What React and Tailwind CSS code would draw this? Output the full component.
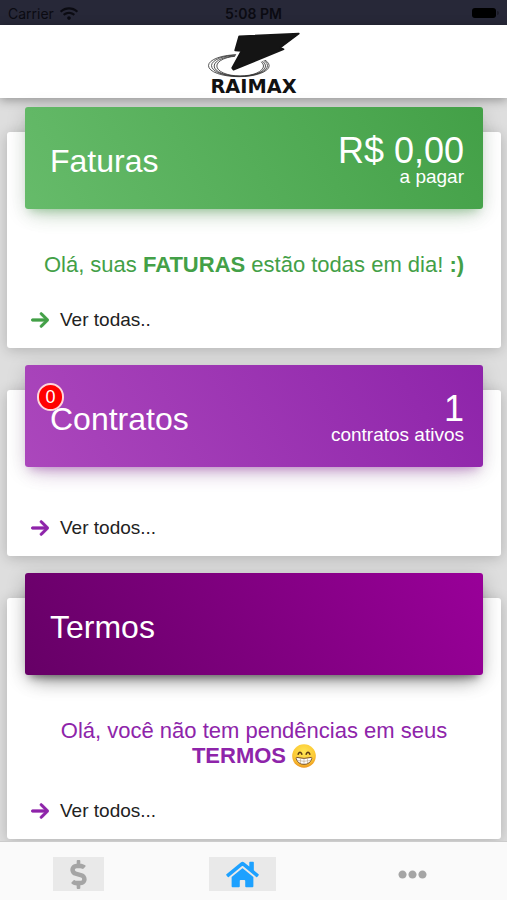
import React from "react";
import { FaDollarSign, FaEllipsisH, FaHome, FaWifi } from "react-icons/fa";
import { FaArrowRight } from "react-icons/fa6";

const CARD_STYLES = {
  green: {
    header:
      "bg-linear-[60deg,#66bb6a,#43a047] shadow-[0_12px_20px_-10px_rgba(76,175,80,0.3),0_4px_20px_0_rgba(0,0,0,0.15),0_7px_8px_-5px_rgba(76,175,80,0.3)]",
    text: "text-[#43a047]",
  },
  purple: {
    header:
      "bg-linear-[60deg,#ab47bc,#8e24aa] shadow-[0_12px_20px_-10px_rgba(156,39,176,0.3),0_4px_20px_0_rgba(0,0,0,0.15),0_7px_8px_-5px_rgba(156,39,176,0.3)]",
    text: "text-[#8e24aa]",
  },
  dark: {
    header:
      "bg-linear-[60deg,#660066,#990099] shadow-[0_12px_20px_-10px_rgba(0,0,0,0.4),0_4px_20px_0_rgba(0,0,0,0.2),0_7px_8px_-5px_rgba(0,0,0,0.4)]",
    text: "text-[#8e24aa]",
  },
};

const BOLT = "M207 31 L386 23 L330 65 L340 70 L190 131 L186 126 L214 75 L195 73 Z";

const Logo = () => (
  <svg viewBox="30 3 440 213" className="w-[147px] h-[71px]" role="img" aria-label="Raimax">
    <g fill="none" stroke="#333" strokeWidth="2.5">
      <ellipse cx="206" cy="119" rx="91" ry="33" />
      <ellipse cx="208" cy="119" rx="84" ry="32" />
      <ellipse cx="209" cy="120" rx="77" ry="31" />
      <ellipse cx="210" cy="120" rx="70" ry="30" />
    </g>
    {/* white halo that opens the rings around the bolt */}
    <path d={BOLT} fill="#fff" stroke="#fff" strokeWidth="18" strokeLinejoin="round" />
    <path d={BOLT} fill="#141414" stroke="#141414" strokeWidth="5" strokeLinejoin="round" />
    <text
      x="250"
      y="201"
      textAnchor="middle"
      className="font-['DejaVu_Sans',sans-serif] text-[58px] font-bold"
      fill="#111"
    >
      RAIMAX
    </text>
  </svg>
);

const GrinEmoji = () => (
  <svg viewBox="0 0 24 24" className="inline-block w-6 h-6 align-[-5px]" role="img" aria-label="sorriso">
    <defs>
      <radialGradient id="face" cx="0.5" cy="0.35" r="0.65">
        <stop offset="0" stopColor="#ffe755" />
        <stop offset="0.7" stopColor="#fcc934" />
        <stop offset="1" stopColor="#eb9420" />
      </radialGradient>
    </defs>
    <circle cx="12" cy="12" r="11.8" fill="url(#face)" />
    <g fill="none" stroke="#5b3a12" strokeWidth="1.6" strokeLinecap="round">
      <path d="M6.2 10.2 Q8 6.4 9.8 10.2" />
      <path d="M14.2 10.2 Q16 6.4 17.8 10.2" />
    </g>
    <path
      d="M4.6 13.4 Q12 15.4 19.4 13.4 Q20 13.4 19.8 14.6 Q18 20.4 12 20.4 Q6 20.4 4.2 14.6 Q4 13.4 4.6 13.4 Z"
      fill="#fff"
      stroke="#80552a"
      strokeWidth="1"
    />
    <path d="M5 16.4 Q12 18.2 19 16.4 M8.5 14.4 V19.4 M12 14.6 V20 M15.5 14.4 V19.4" fill="none" stroke="#b9a58c" strokeWidth="0.6" />
  </svg>
);

function StatusBar() {
  return (
    <div className="grid grid-cols-3 items-center h-[25px] px-2 bg-[#272838] text-[#0b0b12] font-[Inter,sans-serif] text-sm">
      <span className="flex items-center gap-1.5 pt-0.5">
        Carrier
        <FaWifi className="w-[18px] h-[15px]" />
      </span>
      <span className="pt-0.5 text-center font-semibold">5:08 PM</span>
      <span className="flex items-center justify-end gap-px">
        <span className="w-6 h-2.5 rounded-[3px] bg-black" />
        <span className="w-0.5 h-1 rounded-r bg-[#1b1b26]" />
      </span>
    </div>
  );
}

function Card({ title, color, value, caption, badge, link, children }) {
  const style = CARD_STYLES[color];

  return (
    <section className="pb-4 rounded-[3px] bg-white shadow-[0_2px_14px_rgba(0,0,0,0.2)]">
      <div
        className={`relative flex items-center justify-between h-[102px] mx-[18px] -mt-[25px] pl-[25px] pr-[19px] rounded-[3px] text-white ${style.header}`}
      >
        <h2 className="pt-1.5 text-[32px] leading-10">{title}</h2>
        {value && (
          <div className="pt-1.5 text-right">
            <p className="text-4xl leading-8">{value}</p>
            <p className="text-[19px] leading-5">{caption}</p>
          </div>
        )}
        {badge != null && (
          <span className="absolute left-3 top-[18px] flex items-center justify-center w-[27px] h-7 rounded-full border-2 border-[#ffd5dc] bg-[#f00] text-lg leading-none">
            {badge}
          </span>
        )}
      </div>

      {children ? (
        <p className={`pt-[43px] pb-[31px] px-8 text-center text-[22px] leading-[25px] ${style.text}`}>{children}</p>
      ) : (
        <div className="h-[49px]" />
      )}

      <a href="#" className="flex items-center gap-[11px] h-6 pl-6 text-[19px] text-[#222]">
        <FaArrowRight className={`w-[18px] h-5 ${style.text}`} stroke="currentColor" strokeWidth="18" />
        {link}
      </a>
    </section>
  );
}

function TabBar() {
  return (
    <nav className="flex items-center justify-around pt-[15px] pb-[9px] pr-2.5 bg-[#fafafa] border-t border-[#ccc] text-[#a5a5a5]">
      <button className="flex items-center justify-center h-[34px] px-[17px] bg-[#e9e9e9]" aria-label="Faturas">
        <FaDollarSign className="w-[17px] h-[29px]" />
      </button>
      <button className="flex items-center justify-center h-[34px] px-[17px] bg-[#e9e9e9] text-[#1da1ff]" aria-label="Início">
        <FaHome className="w-[33px] h-[29px]" />
      </button>
      <button className="flex items-center justify-center h-[34px] px-[17px]" aria-label="Mais">
        <FaEllipsisH className="w-[29px] h-[29px]" />
      </button>
    </nav>
  );
}

export default function App() {
  return (
    <div className="flex flex-col min-h-screen bg-[#dedede] font-['Liberation_Sans',Arial,sans-serif]">
      <StatusBar />
      <header className="flex justify-center pt-0.5 bg-white shadow-[0_2px_10px_rgba(0,0,0,0.35)]">
        <Logo />
      </header>

      <main className="flex-1 flex flex-col gap-[42px] pt-[34px] pl-[7px] pr-1.5">
        <Card title="Faturas" color="green" value="R$ 0,00" caption="a pagar" link="Ver todas..">
          Olá, suas <b>FATURAS</b> estão todas em dia! <b>:)</b>
        </Card>
        <Card title="Contratos" color="purple" value="1" caption="contratos ativos" badge={0} link="Ver todos..." />
        <Card title="Termos" color="dark" link="Ver todos...">
          Olá, você não tem pendências em seus <b>TERMOS</b> <GrinEmoji />
        </Card>
      </main>

      <TabBar />
    </div>
  );
}
